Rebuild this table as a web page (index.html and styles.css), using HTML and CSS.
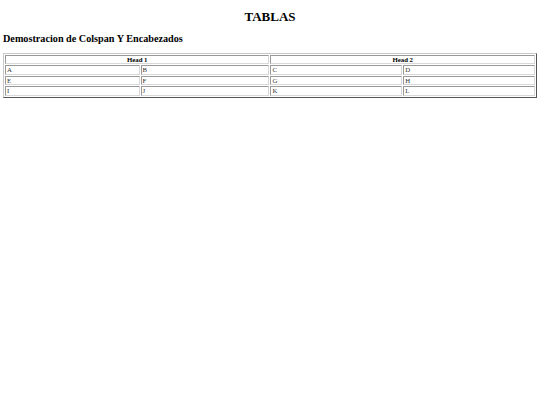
FILE: index.html
```html
<!DOCTYPE html>
<html>
<head>
<meta charset="utf-8">
<title>Tablas</title>
<link rel="stylesheet" href="styles.css">
</head>
<body>
<h1 class="title">TABLAS</h1>
<h2 class="subtitle">Demostracion de Colspan Y Encabezados</h2>
<table class="grid">
  <tr><th colspan="2">Head 1</th><th colspan="2">Head 2</th></tr>
  <tr><td>A</td><td>B</td><td>C</td><td>D</td></tr>
  <tr><td>E</td><td>F</td><td>G</td><td>H</td></tr>
  <tr><td>I</td><td>J</td><td>K</td><td>L</td></tr>
</table>
</body>
</html>
```
FILE: styles.css
```css
html { background: #fff; }
body {
  margin: 3px;
  font-family: "Liberation Serif", "Times New Roman", serif;
  color: #000;
}
.title {
  font-size: 13px;
  text-align: center;
  margin: 5.6px 0 8px;
}
.subtitle {
  font-size: 10.2px;
  margin: 6px 0 9px;
}
.grid {
  width: 100%;
  border: 1px solid;
  border-color: #c8c8c8 #555 #555 #c8c8c8;
  border-spacing: 1px;
  font-size: 6.8px;
  color: #333;
}
.grid th, .grid td {
  border: 1px solid;
  border-color: #999 #d8d8d8 #d8d8d8 #999;
  padding: 0 1px;
  text-align: left;
  line-height: 7.5px;
}
.grid th { text-align: center; color: #000; }
```
